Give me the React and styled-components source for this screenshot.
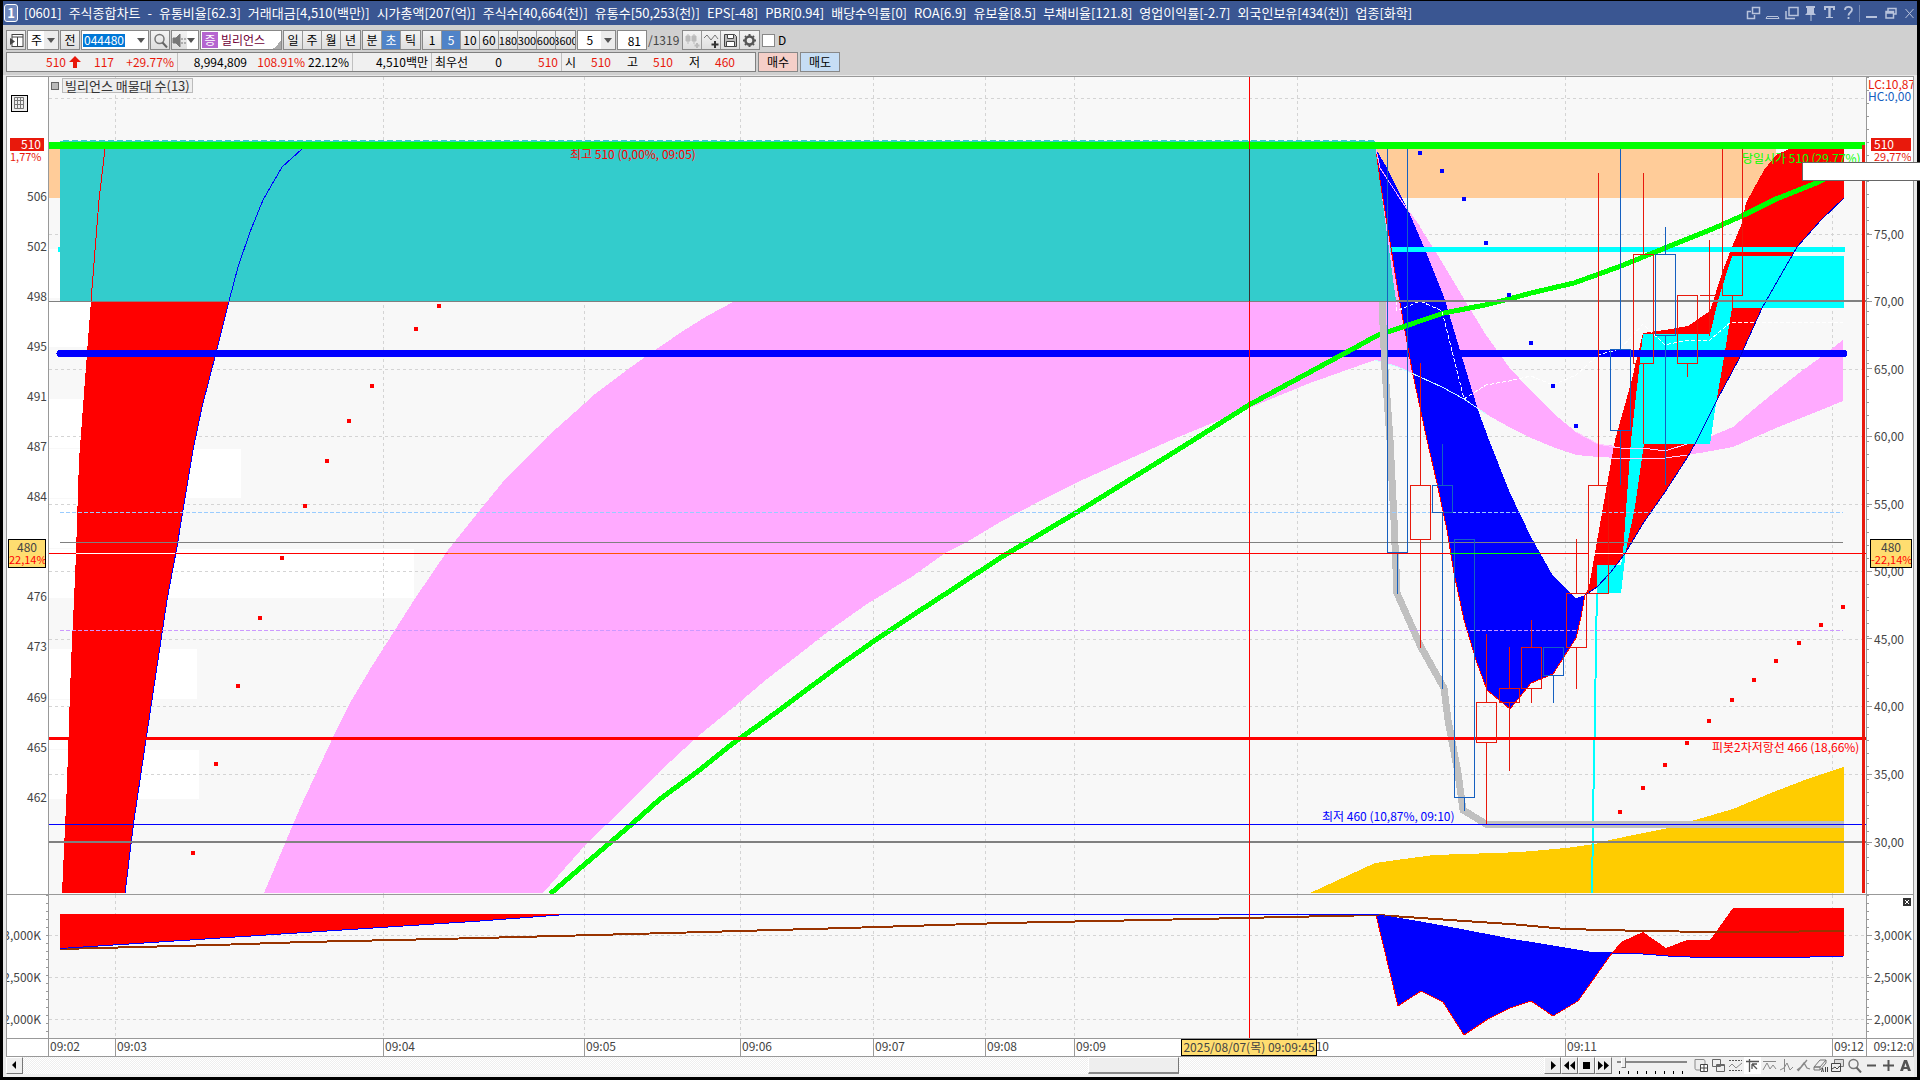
import React, { useState } from 'react';
import styled, { createGlobalStyle, css } from 'styled-components';

const GlobalStyle = createGlobalStyle`
  * {
    box-sizing: border-box;
  }

  body {
    margin: 0;
    background: #000;
  }

  body, button, input, select {
    font-family: 'Noto Sans CJK KR', sans-serif;
    font-size: 12px;
    line-height: 14px;
    color: #000;
  }
`;

const RED = '#e8190c';
const BLUE = '#1560c0';

// plot area in chart units
const PLOT = { x: 49, y: 77, w: 1817, h: 817 };
const VOLUME = { y: 895, h: 143 };

const Window = styled.div`
  position: relative;
  display: flex;
  flex-direction: column;
  min-height: 100vh;
  border: 3px solid #000;
  border-top-width: 1px;
  background: #e8e8e8;
`;

const TitleBar = styled.header`
  display: flex;
  align-items: center;
  justify-content: space-between;
  height: 24px;
  flex: none;
  padding: 0 0 0 1px;
  background: #3a5692;
  color: #fff;
`;

const Title = styled.h1`
  display: flex;
  align-items: center;
  gap: 7px;
  margin: 0;
  font-size: 13px;
  font-weight: 400;
  line-height: 16px;
  white-space: nowrap;
`;

const ScreenNo = styled.span`
  width: 14px;
  height: 18px;
  margin-right: -1px;
  border: 1px solid #fff;
  border-radius: 3px;
  background: #6f88bd;
  font-weight: 700;
  line-height: 16px;
  text-align: center;
`;

const WindowTools = styled.div`
  display: flex;
  align-items: center;
  gap: 3px;
`;

const TitleButton = styled.button`
  display: flex;
  align-items: center;
  justify-content: center;
  width: 16px;
  height: 18px;
  padding: 0;
  border: 0;
  background: none;
  color: #b8c3dc;
`;

const Divider = styled.span`
  width: 1px;
  height: 17px;
  background: #7287b4;
`;

const Bars = styled.div`
  display: flex;
  flex-direction: column;
  gap: 2px;
  flex: none;
  height: 50px;
  padding: 5px 3px 0;
  background: #d0d0d0;
`;

const Row = styled.div`
  display: flex;
  align-items: center;
  gap: ${props => props.$gap || 1}px;
`;

const Group = styled.div`
  display: flex;
  height: 20px;
  border: 1px solid #888;
  background: #e8e8e8;
`;

const ToolButton = styled.button`
  display: flex;
  align-items: center;
  justify-content: center;
  width: ${props => props.$w || 19}px;
  height: 18px;
  padding: 0;
  overflow: hidden;
  border: 0;
  border-right: 1px solid #999;
  background: ${props => (props.$active ? '#4f83c8' : 'linear-gradient(#f4f4f4, #dedede)')};
  color: ${props => (props.$active ? '#fff' : '#000')};
  font-size: ${props => (props.$small ? 11 : 12)}px;
  white-space: nowrap;

  &:last-child {
    border-right: 0;
  }
`;

const Picker = styled.label`
  display: flex;
  position: relative;
  height: 20px;
  width: ${props => props.$w}px;
  border: 1px solid #888;
  background: #fff;

  &::after {
    content: '';
    position: absolute;
    right: 3px;
    top: 7px;
    border: 4px solid transparent;
    border-top: 5px solid #555;
    border-bottom: 0;
    pointer-events: none;
  }
`;

const PickerField = styled.select`
  width: 100%;
  padding: 0 15px 0 3px;
  border: 0;
  border-radius: 0;
  appearance: none;
  background: linear-gradient(#ececec, #ececec) right / 14px 100% no-repeat #fff;
`;

const CodeField = styled.input`
  width: 54px;
  padding: 0 2px;
  border: 0;
  background: linear-gradient(#0078d7, #0078d7) 1px center / 42px 13px no-repeat #fff;
  color: #fff;
`;

const NameBox = styled.div`
  display: flex;
  align-items: center;
  gap: 3px;
  width: 82px;
  height: 20px;
  padding-left: 1px;
  border: 1px solid #888;
  background: linear-gradient(135deg, transparent 50%, #aaa 50%) right bottom / 8px 8px no-repeat #fff;
  color: #700038;
  white-space: nowrap;
`;

const MarketTag = styled.span`
  width: 16px;
  height: 16px;
  background: #b565d0;
  color: #fff;
  line-height: 15px;
  text-align: center;
`;

const CountField = styled.input`
  width: 30px;
  height: 20px;
  padding: 0 5px;
  border: 1px solid #888;
  text-align: right;
`;

const Total = styled.span`
  width: 33px;
  color: #444;
`;

const CheckLabel = styled.label`
  display: flex;
  align-items: center;
  gap: 3px;

  input {
    width: 13px;
    height: 13px;
    margin: 0 0 0 1px;
    border: 1px solid #888;
    appearance: none;
    background: #fff;
  }
`;

const Quote = styled.dl`
  display: flex;
  width: 750px;
  height: 20px;
  margin: 0;
  border: 1px solid #808080;
  background: #f0f0f0;
  white-space: nowrap;
`;

const QuoteCell = styled.div`
  display: grid;
  grid-template-columns: ${props => props.$cols};
  align-items: center;
  border-right: 1px solid #c0c0c0;
  padding: 0 3px;

  &:last-child {
    border-right: 0;
  }
`;

const Value = styled.dd`
  margin: 0;
  text-align: right;
  color: ${props => (props.$up ? RED : '#000')};
`;

const Caption = styled.dt`
  color: #000;
`;

const OrderButton = styled.button`
  width: 40px;
  height: 20px;
  padding: 0;
  border: 1px solid #888;
  background: ${props => (props.$buy ? '#f5cfc8' : '#c6ddf4')};
`;

const Chart = styled.main`
  flex: 1;
  display: grid;
  grid-template-columns: 42px minmax(0, 1fr) 47px;
  grid-template-rows: minmax(0, 1fr) 144px 17px;
  margin: 1px 3px 0;
  border: 1px solid #999;
  background: #fff;
`;

const Cell = styled.div`
  position: relative;
  overflow: hidden;
  border-bottom: 1px solid #999;
  background: ${props => (props.$plot ? '#f8f8f8' : '#fff')};
  ${props => props.$side === 'left' && css`border-right: 1px solid #999;`}
  ${props => props.$side === 'right' && css`border-left: 1px solid #999;`}

  &:nth-last-child(-n + 3) {
    border-bottom: 0;
  }
`;

const Drawing = styled.svg`
  display: block;
  position: absolute;
  inset: 0;
  width: 100%;
  height: 100%;
`;

const AxisLabel = styled.span`
  position: absolute;
  transform: translateY(-50%);
  color: #444;
  white-space: nowrap;
  ${props => (props.$left
    ? css`right: 1px;`
    : css`
      left: 0;
      padding-left: 7px;
      background: linear-gradient(#999, #999) left center / 5px 1px no-repeat;
    `)}
`;

const Ticks = styled.div`
  position: absolute;
  top: 0;
  bottom: 0;
  width: 2px;
  ${props => props.$side}: 0;
  background: repeating-linear-gradient(#999 0 1px, transparent 1px ${props => props.$step}px);
`;

const AxisNote = styled.span`
  position: absolute;
  left: 1px;
  top: ${props => props.$top}px;
  line-height: 12px;
  color: ${props => props.color};
  white-space: nowrap;
`;

const PriceTag = styled.span`
  position: absolute;
  left: ${props => (props.$left ? 3 : 4)}px;
  top: 61px;
  width: ${props => (props.$left ? 34 : 40)}px;
  height: 26px;
  overflow: hidden;
  background: linear-gradient(${RED}, ${RED}) top / 100% 13px no-repeat;
  line-height: 12px;
  color: ${RED};
  white-space: nowrap;

  b {
    display: block;
    padding: 0 3px;
    color: #fff;
    font-weight: 400;
    text-align: ${props => (props.$left ? 'right' : 'left')};
  }

  i {
    display: block;
    padding-left: ${props => (props.$left ? 0 : 3)}px;
    font-size: 11px;
    font-style: normal;
  }
`;

const CursorTag = styled.span`
  position: absolute;
  left: ${props => (props.$left ? 1 : 3)}px;
  width: ${props => (props.$left ? 38 : 42)}px;
  height: 29px;
  overflow: hidden;
  border: 1px solid #000;
  background: #ffdd70;
  color: #444;
  line-height: 13px;
  text-align: center;
  white-space: nowrap;

  i {
    display: block;
    color: #f00;
    font-size: 11px;
    font-style: normal;
  }
`;

const Legend = styled.div`
  position: absolute;
  left: 2px;
  top: 1px;
  display: flex;
  align-items: center;
  gap: 3px;
  color: #333;

  &::before {
    content: '';
    width: 6px;
    height: 6px;
    border: 1px solid #666;
    background: #bbb;
  }

  span {
    height: 15px;
    padding: 0 2px;
    border: 1px solid #bbb;
    background: #eee;
    font-size: 13px;
    line-height: 13px;
  }
`;

const Marker = styled.span`
  position: absolute;
  height: 13px;
  overflow: hidden;
  line-height: 10px;
  color: ${props => props.color};
  white-space: nowrap;
`;

const GridButton = styled.button`
  position: absolute;
  left: 4px;
  top: 18px;
  display: flex;
  padding: 0;
  border: 1px solid #000;
  background: #eee;
`;

const CloseButton = styled.button`
  position: absolute;
  right: 2px;
  top: 3px;
  display: flex;
  width: 8px;
  height: 8px;
  padding: 1px;
  border: 0;
  background: #333;
`;

const TimeLabel = styled.span`
  position: absolute;
  top: 0;
  bottom: 0;
  padding-left: 1px;
  border-left: 1px solid #999;
  color: #444;
  line-height: 14px;
  white-space: nowrap;
`;

const DateTag = styled.span`
  position: absolute;
  top: 0;
  width: 136px;
  height: 17px;
  border: 1px solid #000;
  background: #ffdd70;
  color: #444;
  line-height: 13px;
  text-align: center;
  white-space: nowrap;
`;

const Popup = styled.div`
  position: absolute;
  right: -3px;
  top: 161px;
  width: 118px;
  height: 19px;
  border: 1px solid #666;
  border-right: 0;
  background: #fff;
`;

const Footer = styled.footer`
  display: flex;
  align-items: center;
  height: 20px;
  flex: none;
  margin: 0 3px;
  padding-bottom: 3px;
  background: #f0f0f0;
`;

const RaisedButton = styled.button`
  display: flex;
  align-items: center;
  justify-content: center;
  width: 17px;
  height: 17px;
  padding: 0;
  border: 1px solid #fff;
  border-right-color: #777;
  border-bottom-color: #777;
  background: #eee;
`;

const ScrollTrack = styled.div`
  flex: 1;
  height: 17px;
  background: repeating-conic-gradient(#eee 0 25%, #fff 0 50%) 0 0 / 2px 2px;
`;

const ScrollThumb = styled.div`
  width: 6%;
  height: 17px;
  margin-left: 70%;
  border: 1px solid #fff;
  border-right-color: #777;
  border-bottom: 2px solid #888;
  background: #eee;
`;

const Speed = styled.input`
  width: 70px;
  height: 17px;
  margin: 0 6px 0 5px;
  appearance: none;
  background:
    linear-gradient(#888, #888) 0 4px / 100% 2px no-repeat,
    repeating-linear-gradient(90deg, transparent 0 2px, #000 2px 3px, transparent 3px 9px) 0 14px / 100% 3px no-repeat;

  &::-webkit-slider-thumb {
    width: 5px;
    height: 11px;
    margin-top: -6px;
    border: 1px solid #fff;
    border-right-color: #777;
    border-bottom-color: #777;
    appearance: none;
    background: #eee;
  }
`;

const FootButton = styled.button`
  display: flex;
  align-items: center;
  justify-content: center;
  width: 17px;
  height: 17px;
  padding: 0;
  border: 0;
  background: ${props => (props.$active ? '#fff' : 'none')};
`;

const icons = {
  panel: <><rect x="3" y="1.5" width="11" height="12" fill="#fff" stroke="#444" /><path d="M3 4h11M8.500 4v9" stroke="#444" /><path d="M1 5l5 3.500-5 3.500z" fill="#444" /></>,
  search: <><circle cx="6.500" cy="6" r="4.500" fill="none" stroke="#777" strokeWidth="1.500" /><path d="M9.500 9.500l4.500 5" stroke="#666" strokeWidth="2" /></>,
  speaker: <path d="M1 5h3l4-4v13l-4-4H1zM10 5v2M10 9v2M13 5v2M13 9v2" fill="#777" stroke="#777" />,
  candles: <><path d="M1 3h4v5H1zM7 3h4v5H7zM3 1v10M9 1v10" fill="#bbb" stroke="#bbb" /><path d="M12 10v5M9.500 12.500h5" stroke="#bbb" strokeWidth="2" /></>,
  wave: <><path d="M0 5l3-3 4 5 4-5 3 4" fill="none" stroke="#777" /><path d="M11 8v7M7.500 11.500h7" stroke="#333" strokeWidth="2" /></>,
  save: <><path d="M1.500 1.500h10l2 2v10h-12z" fill="#bbb" stroke="#444" /><path d="M4.500 1.500h6v4h-6zM3.500 8.500h8v5h-8z" fill="#fff" stroke="#444" /></>,
  gear: <><circle cx="7.500" cy="7.500" r="4" fill="none" stroke="#555" strokeWidth="2.500" /><path d="M7.500 1v2M7.500 12v2M1 7.500h2M12 7.500h2M3 3l1 1M11 11l1 1M12 3l-1 1M3 12l1-1" stroke="#555" strokeWidth="2" /></>,
  popOut: <path d="M6.500 1.500h7v6h-7zM5 5.500H1.500v7h7V9" fill="none" stroke="currentColor" strokeWidth="1.500" />,
  lower: <path d="M2 10.500h11l1 2H1z" fill="none" stroke="currentColor" />,
  windows: <path d="M5 1.500h9v8H5zM2 5v7.500h9" fill="none" stroke="currentColor" strokeWidth="1.500" />,
  pin: <path d="M3 0h9v2h-1v5l2 2H8.500v6h-1V9H2l2-2V2H3z" fill="currentColor" />,
  text: <path d="M2 0h11v4h-2V2H8.700v9H11v1H4v-1h2.300V2H4v2H2z" fill="currentColor" />,
  help: <path d="M4 4c0-4 7-4 7-.5 0 3-3.500 3-3.500 6M7.500 11v2" fill="none" stroke="currentColor" strokeWidth="1.800" />,
  minimize: <path d="M2 11h11" stroke="currentColor" strokeWidth="2" />,
  restore: <path d="M5 5V2.500h8V8h-2M3 5.500h7.500V12H3zM3 7h7.500" fill="none" stroke="currentColor" strokeWidth="1.500" />,
  close: <path d="M3.500 3l8 9M11.500 3l-8 9" stroke="currentColor" />,
  grid: <><path d="M2.500 1.500h9v11h-9zM2.500 4.500h9M5.500 1.500v11M8.500 1.500v11M2.500 8.500h9" fill="none" stroke="#777" /></>,
  prev: <path d="M9 3v8L5 7z" />,
  play: <path d="M6 3v9l5-4.500z" />,
  rewind: <path d="M7 3v9L2 7.500zM13 3v9L8 7.500z" />,
  stop: <path d="M4 4h7v7H4z" />,
  forward: <path d="M2 3v9l5-4.500zM8 3v9l5-4.500z" />,
  newChart: <><path d="M1 1.500h8c2 0 2 1 2 3V12H3c-2 0-2-1-2-3z" fill="#eee" stroke="#888" /><path d="M6.500 6.500h7v7h-7zM10 6.500v7M6.500 10h7" fill="#fff" stroke="#444" /></>,
  cascade: <path d="M1.500 1.500h8v7h-8zM5.500 6.500h8v7h-8zM5.500 7.500h8" fill="#eee" stroke="#666" />,
  range: <><path d="M1 2.500h13M1 12.500h13" stroke="#555" strokeDasharray="2 1" /><path d="M1 9l3-3 4 4 6-5" fill="none" stroke="#888" /></>,
  cursor: <path d="M1 3.500h13M4.500 1v13M7 6v5M7 6l5 5M7 6h5" fill="none" stroke="#555" strokeWidth="1.300" />,
  hline: <path d="M1 3.500h13M1 12l4-7 3 6 3-4 3 4" fill="none" stroke="#888" />,
  vline: <path d="M5.500 1v13M1 12l4-2 3-5 3 7 3-3" fill="none" stroke="#888" />,
  slope: <path d="M2 13L11 2M1 12l4-3 3-4 3 5 3 1" fill="none" stroke="#888" strokeWidth="1.300" />,
  eraser: <><path d="M1 9l6-7h6l-6 7zM1 9h6v3H1zM7 12l6-7V2" fill="#eee" stroke="#777" /><path d="M8.500 14l1-4 1 4M12.500 9v5M14.500 9v5" fill="none" stroke="#444" /></>,
  tiles: <><path d="M4.500 1.500h9v7h-9z" fill="#ddd" stroke="#777" /><path d="M1.500 5.500h9v8h-9zM2 11l3-2 2 2 3-3" fill="#eee" stroke="#444" /></>,
  minus: <path d="M3 7.500h9" stroke="#555" strokeWidth="2" />,
  plus: <path d="M2 7.500h11M7.500 2v11" stroke="#555" strokeWidth="2" />,
  letter: <path fillRule="evenodd" d="M6 2h3l4 11h-3l-.7-2H5.700L5 13H2zM7.500 5l-1.200 4h2.400z" fill="#555" />,
};

const Icon = ({ name }) => (
  <svg width="15" height="15" viewBox="0 0 15 15" fill="#000" aria-hidden="true">
    {icons[name]}
  </svg>
);

const titleParts = [
  '[0601]', '주식종합차트', '-', '유통비율[62.3]', '거래대금[4,510(백만)]', '시가총액[207(억)]',
  '주식수[40,664(천)]', '유통수[50,253(천)]', 'EPS[-48]', 'PBR[0.94]', '배당수익률[0]', 'ROA[6.9]',
  '유보율[8.5]', '부채비율[121.8]', '영업이익률[-2.7]', '외국인보유[434(천)]', '업종[화학]',
];
const titleTools = ['popOut', 'lower', 'windows', 'pin', 'text', 'help'];
const windowTools = ['minimize', 'restore', 'close'];
const footTools = ['newChart', 'cascade', 'range', 'cursor', 'hline', 'vline', 'slope', 'eraser', 'tiles', 'search', 'minus', 'plus', 'letter'];
const periods = ['일', '주', '월', '년'];
const units = ['분', '초', '틱'];
const intervals = ['1', '5', '10', '60', '180', '300', '600', '3600'];

const leftPrices = [
  [196, '506'], [246, '502'], [296, '498'], [346, '495'], [396, '491'], [446, '487'], [496, '484'],
  [596, '476'], [646, '473'], [697, '469'], [747, '465'], [797, '462'],
];
const rightRates = [
  [234, '75,00'], [301, '70,00'], [369, '65,00'], [436, '60,00'], [504, '55,00'],
  [571, '50,00'], [639, '45,00'], [706, '40,00'], [774, '35,00'], [842, '30,00'],
];
const volumes = [[935, '3,000K'], [977, '2,500K'], [1019, '2,000K']];
const times = [
  [115, '09:03'], [383, '09:04'], [584, '09:05'], [740, '09:06'], [873, '09:07'], [985, '09:08'],
  [1074, '09:09'], [1297, '09:10'], [1565, '09:11'], [1832, '09:12'],
];
const gridRows = [98, 167, 234, 301, 369, 436, 504, 571, 639, 706, 774, 841];

// x, y, width, height of the empty price bands
const bands = [
  [49, 249, 11, 49], [49, 301, 50, 46], [49, 399, 50, 49], [49, 449, 192, 49], [49, 499, 50, 49],
  [49, 549, 365, 49], [49, 649, 148, 50], [49, 700, 30, 49], [49, 750, 150, 49],
];

// x, wick top, body top, body bottom, wick bottom, rising
const candles = [
  [1397, 552, 146, 552, 594, false],
  [1420, 363, 485, 539, 648, true],
  [1442, 444, 485, 512, 689, false],
  [1464, 539, 539, 797, 811, false],
  [1486, 634, 702, 742, 824, true],
  [1509, 647, 688, 702, 771, true],
  [1531, 620, 647, 688, 703, true],
  [1553, 647, 647, 675, 703, false],
  [1576, 539, 593, 647, 689, true],
  [1598, 173, 485, 593, 593, true],
  [1620, 149, 349, 430, 485, false],
  [1643, 173, 254, 363, 444, true],
  [1665, 227, 254, 335, 485, false],
  [1687, 295, 295, 363, 377, true],
  [1709, 240, 295, 295, 336, true],
  [1732, 295, 146, 295, 308, true],
];

const risingDots = [
  [193, 853], [216, 764], [238, 686], [260, 618], [282, 558], [305, 506], [327, 461], [349, 421],
  [372, 386], [416, 329], [439, 306], [1620, 812], [1643, 788], [1665, 765], [1687, 743],
  [1709, 721], [1732, 700], [1754, 680], [1776, 661], [1799, 643], [1821, 625], [1843, 607],
];
const fallingDots = [
  [1420, 153], [1442, 171], [1464, 199], [1486, 243], [1509, 295], [1531, 343], [1553, 386], [1576, 426],
];

const shapes = {
  redBandLeft: '91,301 87,353 82,420 79,460 76,553 74,600 71,663 67,783 62,893 125,893 134,820 147,733 161,640 167,600 177,547 183,510 193,450 202,407 216,353 229,301',
  blueEdgeLeft: '302,149 282,167 263,200 250,232 238,267 229,301 216,353 202,407 193,450 183,510 177,547 167,600 161,640 147,733 134,820 125,893',
  pinkBand: '264,893 300,808 335,733 350,703 372,666 395,630 414,600 431,575 448,550 480,510 502,483 517,467 548,436 584,404 595,394 627,370 645,357 683,331 707,316 735,301 735,280 1376,280 1376,149 1407,209 1420,227 1442,262 1464,299 1486,335 1509,367 1531,391 1553,413 1576,432 1598,444 1643,449 1665,451 1687,443 1709,437 1733,427 1754,409 1776,391 1799,373 1821,357 1843,340 1843,401 1821,410 1776,428 1733,447 1700,453 1665,457 1620,458 1598,457 1576,455 1553,447 1531,438 1509,427 1486,414 1464,399 1442,387 1420,377 1398,367 1375,360 1310,383 1249,408 1176,438 1120,463 1080,481 1040,501 1000,522 967,542 945,553 913,576 867,604 830,630 797,656 767,679 735,706 697,737 657,774 607,824 588,842 543,893',
  pinkLow: '1376,149 1380,168 1407,209 1420,227',
  whiteLow: '1375,360 1398,367 1420,377 1442,387 1464,399 1486,414',
  teal: '60,140 1375,140 1377,160 1396,301 60,301',
  blueDip: '1376,149 1380,180 1388,230 1399,297 1412,370 1427,440 1437,483 1447,530 1454,573 1464,620 1476,660 1487,690 1510,709 1531,683 1553,674 1576,638 1581,617 1585,595 1576,598 1553,576 1531,537 1510,493 1489,440 1478,410 1462,357 1444,297 1424,247 1408,210 1387,168',
  dipEdge: '1376,149 1380,180 1388,230 1399,297 1412,370 1427,440 1437,483 1447,530 1454,573 1464,620 1476,660 1487,690 1510,709 1531,683 1553,674 1576,638 1581,617 1585,595',
  redRise: '1585,595 1589,587 1606,490 1615,440 1631,383 1643,333 1665,330 1688,326 1710,311 1722,273 1732,247 1742,223 1746,203 1753,190 1764,170 1776,155 1789,149 1844,149 1844,198 1821,220 1797,247 1778,280 1762,308 1740,357 1717,400 1696,442 1687,458 1665,492 1644,522 1624,555 1610,573 1597,587',
  riseEdge: '1844,198 1821,220 1797,247 1778,280 1762,308 1740,357 1717,400 1696,442 1687,458 1665,492 1644,522 1624,555 1610,573 1597,587 1585,595',
  cloud: '1597,565 1621,565 1623,553 1631,440 1643,334 1710,334 1719,297 1732,256 1844,256 1844,308 1732,308 1724,357 1715,410 1710,444 1644,444 1635,507 1626,550 1621,593 1597,593',
  cloudTail: '1597,593 1596,640 1595,720 1594,757 1593,823 1592,893',
  lowLine: '1382,302 1385,370 1390,440 1394,520 1397,593 1421,647 1444,688 1448,720 1458,773 1463,810 1486,824 1844,824',
  average: '550,894 612,841 633,823 660,799 697,772 732,744 770,717 813,685 840,665 877,639 913,615 953,589 1000,558 1079,511 1176,451 1249,405 1360,345 1376,336 1420,321 1444,313 1485,305 1509,299 1531,293 1574,283 1621,266 1643,257 1665,248 1710,230 1744,215 1776,199 1819,182 1844,168',
  yellow: '1310,893 1375,863 1389,861 1434,855 1494,853 1521,852 1566,848 1595,844 1610,840 1643,833 1668,828 1695,820 1733,809 1771,793 1810,778 1844,767 1844,893',
  middle: '1396,301 1397,311 1420,301 1442,311 1464,399 1486,385 1509,381 1531,376 1553,385 1576,375 1598,355 1620,349 1643,324 1665,345 1687,340 1710,340 1731,322 1843,322',
};

const PriceChart = () => (
  <Drawing
    viewBox={`${PLOT.x} ${PLOT.y} ${PLOT.w} ${PLOT.h}`}
    preserveAspectRatio="none"
    shapeRendering="crispEdges"
    fill="none"
  >
    <g fill="#fff">
      {bands.map(([x, y, w, h]) => <rect key={y} x={x} y={y} width={w} height={h} />)}
    </g>
    <g stroke="#d4d4d4" strokeDasharray="3 3">
      {gridRows.map(y => <path key={y} d={`M49 ${y}.5H1866`} />)}
      {times.map(([x]) => <path key={x} d={`M${x}.5 77V894`} />)}
    </g>
    <path d="M49 149h11v49H49zM1376 149h400v49h-400z" fill="#ffcc99" />
    <polygon points={shapes.pinkBand} fill="#ffaaff" />
    <polygon points={shapes.redBandLeft} fill="#f00" />
    <path d="M60 353.500H1844" stroke="#00f" strokeWidth="7" strokeLinecap="round" />
    <polygon points={shapes.yellow} fill="#ffcc00" />
    <polygon points={shapes.blueDip} fill="#00f" />
    <path d="M1390 249.500H1845M58 249.500h4" stroke="#0ff" strokeWidth="5" />
    <polygon points={shapes.teal} fill="#33cccc" />
    <path d="M60 140.500H1375" stroke="#f8f8f8" strokeDasharray="3 6" />
    <polyline points={shapes.dipEdge} stroke="#f00" />
    <polyline points={shapes.pinkLow} stroke="#ffaaff" />
    <polyline points={shapes.whiteLow} stroke="#ccffff" />
    <polyline points="105,149 99,200 91,301" stroke="#f00" />
    <polyline points={shapes.blueEdgeLeft} stroke="#00f" />
    <polygon points={shapes.redRise} fill="#f00" />
    <polygon points={shapes.cloud} fill="#0ff" />
    <path d="M1725 249.500H1845" stroke="#0ff" strokeWidth="5" />
    <path d="M1630 353.500H1780" stroke="#00f" strokeWidth="7" />
    <polyline points={shapes.riseEdge} stroke="#00c" />
    <polyline points={shapes.cloudTail} stroke="#0ff" strokeWidth="2" />
    <path d="M1576 432l22 12 22 4 23 0 22 3 22-7M1611 458h54l22-3" stroke="#ffccff" />
    <polyline points={shapes.average} stroke="#0f0" strokeWidth="5" />
    <polyline points={shapes.lowLine} stroke="#c0c0c0" strokeWidth="7" />
    <polyline points={shapes.middle} stroke="#fff" strokeDasharray="4 2" />

    <path d="M60 512.500H1843" stroke="#99ccff" strokeDasharray="4 2" />
    <path d="M60 630.500H1843" stroke="#cc99ff" strokeDasharray="4 2" />
    <path d="M49 301.500H1396M60 542.500H1843" stroke="#808080" />
    <path d="M1396 301H1866M49 842H1866" stroke="#808080" strokeWidth="2" />
    <path d="M49 824.500H1866" stroke="#00f" />
    <path d="M49 738.500H1866" stroke="#f00" strokeWidth="3" />

    {candles.map(([x, high, top, bottom, low, rising]) => (
      <path
        key={x}
        d={`M${x}.5 ${high}V${high < top ? top : high}M${x}.5 ${bottom}V${low}M${x - 10}.5 ${top}.5h20V${bottom}.5h-20z`}
        stroke={rising ? RED : BLUE}
      />
    ))}
    <g fill="#f00">
      {risingDots.map(([x, y]) => <circle key={x} cx={x} cy={y} r="2.300" />)}
    </g>
    <g fill="#00f">
      {fallingDots.map(([x, y]) => <circle key={x} cx={x} cy={y} r="2.300" />)}
    </g>

    <path d="M49 145.500H1865" stroke="#0f0" strokeWidth="7" />
    <path d="M1863.500 145V893" stroke={RED} strokeWidth="3" />
    <path d="M49 553.500H1866" stroke="#f00" />
    <path d="M76 553.500H175M1589 553.500H1623" stroke="#fff" />
    <path d="M448 553.500H945" stroke="#ff5500" />
    <path d="M1450 553.500H1540" stroke="#0f0" />
    <path d="M1249.500 77V894" stroke="#f00" />
    <path d="M1249.500 149V301" stroke="#333" />
  </Drawing>
);

const VolumeChart = () => (
  <Drawing
    viewBox={`${PLOT.x} ${VOLUME.y} ${PLOT.w} ${VOLUME.h}`}
    preserveAspectRatio="none"
    shapeRendering="crispEdges"
    fill="none"
  >
    <g stroke="#d4d4d4" strokeDasharray="3 3">
      {volumes.map(([y]) => <path key={y} d={`M49 ${y}.5H1866`} />)}
      {times.map(([x]) => <path key={x} d={`M${x}.5 895V1038`} />)}
    </g>
    <polygon points="60,914 567,914 480,921 60,949" fill="#f00" />
    <polygon
      points="1376,915 1398,1006 1421,991 1443,1002 1464,1035 1488,1019 1510,1008 1531,1001 1553,1016 1578,1001 1612,953 1589,952 1553,946 1510,939 1464,930 1421,922"
      fill="#00f"
    />
    <polyline
      points="1376,915 1398,1006 1421,991 1443,1002 1464,1035 1488,1019 1510,1008 1531,1001 1553,1016 1578,1001 1612,953"
      stroke="#f00"
    />
    <polygon
      points="1612,953 1621,942 1643,932 1666,948 1687,940 1710,940 1733,908 1844,908 1844,956 1711,958 1668,956 1643,954"
      fill="#f00"
    />
    <polyline
      points="60,949 138,947 216,945 305,942 395,940 480,938 595,935 705,932 846,928 1003,923 1197,919 1377,915 1421,918 1464,921 1510,924 1566,929 1644,931 1713,932 1755,932 1844,931"
      stroke="#993300"
      strokeWidth="2"
    />
    <polyline
      points="60,948.500 480,921 566,914.500 1376,914.500 1421,922 1464,930 1510,939 1553,946 1589,952 1612,953 1643,954 1668,956 1711,958 1810,957 1844,956"
      stroke="#00f"
    />
    <path d="M1249.500 895V1038" stroke="#f00" />
  </Drawing>
);

const fromLeft = x => `${((x - PLOT.x) / PLOT.w) * 100}%`;
const fromTop = y => `${((y - PLOT.y) / PLOT.h) * 100}%`;

const App = () => {
  const [interval, setInterval] = useState('5');
  const [unit, setUnit] = useState('초');
  const [code, setCode] = useState('044480');
  const [count, setCount] = useState('81');

  return (
    <>
      <GlobalStyle />
      <Window>
        <TitleBar>
          <Title>
            <ScreenNo>1</ScreenNo>
            {titleParts.map(part => <span key={part}>{part}</span>)}
          </Title>
          <WindowTools>
            {titleTools.map(name => <TitleButton key={name} aria-label={name}><Icon name={name} /></TitleButton>)}
            <Divider />
            {windowTools.map(name => <TitleButton key={name} aria-label={name}><Icon name={name} /></TitleButton>)}
          </WindowTools>
        </TitleBar>

        <Bars>
          <Row>
            <Group><ToolButton $w={18} aria-label="panel"><Icon name="panel" /></ToolButton></Group>
            <Picker $w={32}>
              <PickerField aria-label="종목 구분"><option>주</option></PickerField>
            </Picker>
            <Group><ToolButton $w={18}>전</ToolButton></Group>
            <Picker $w={68}>
              <CodeField aria-label="종목코드" value={code} onChange={e => setCode(e.target.value)} />
            </Picker>
            <Group><ToolButton $w={18} aria-label="search"><Icon name="search" /></ToolButton></Group>
            <Picker $w={28}>
              <ToolButton $w={15} aria-label="speaker"><Icon name="speaker" /></ToolButton>
            </Picker>
            <NameBox><MarketTag>증</MarketTag>빌리언스</NameBox>
            <Group>
              {periods.map(label => <ToolButton key={label}>{label}</ToolButton>)}
            </Group>
            <Group>
              {units.map(label => (
                <ToolButton key={label} $active={label === unit} onClick={() => setUnit(label)}>{label}</ToolButton>
              ))}
            </Group>
            <Group>
              {intervals.map(label => (
                <ToolButton
                  key={label}
                  $small={label.length > 2}
                  $active={label === interval}
                  onClick={() => setInterval(label)}
                >
                  {label}
                </ToolButton>
              ))}
            </Group>
            <Picker $w={39}>
              <PickerField aria-label="간격"><option>&nbsp; 5</option></PickerField>
            </Picker>
            <CountField aria-label="봉 개수" value={count} onChange={e => setCount(e.target.value)} />
            <Total>/1319</Total>
            <Group>
              {['candles', 'wave', 'save', 'gear'].map(name => (
                <ToolButton key={name} aria-label={name}><Icon name={name} /></ToolButton>
              ))}
            </Group>
            <CheckLabel><input type="checkbox" />D</CheckLabel>
          </Row>

          <Row $gap={2}>
            <Quote>
              <QuoteCell $cols="56px 17px 31px 60px">
                <Value $up>510</Value>
                <svg width="17" height="14" viewBox="0 0 17 14"><path d="M9 1l6 6h-4v6H7V7H3z" fill={RED} /></svg>
                <Value $up>117</Value>
                <Value $up>+29.77%</Value>
              </QuoteCell>
              <QuoteCell $cols="66px 58px 44px">
                <Value>8,994,809</Value>
                <Value $up>108.91%</Value>
                <Value>22.12%</Value>
              </QuoteCell>
              <QuoteCell $cols="72px"><Value>4,510백만</Value></QuoteCell>
              <QuoteCell $cols="40px 27px 56px">
                <Caption>최우선</Caption>
                <Value>0</Value>
                <Value $up>510</Value>
              </QuoteCell>
              <QuoteCell $cols="20px 26px 16px 20px 26px 16px 20px 26px">
                <Caption>시</Caption>
                <Value $up>510</Value>
                <span />
                <Caption>고</Caption>
                <Value $up>510</Value>
                <span />
                <Caption>저</Caption>
                <Value $up>460</Value>
              </QuoteCell>
            </Quote>
            <OrderButton $buy>매수</OrderButton>
            <OrderButton>매도</OrderButton>
          </Row>
        </Bars>

        <Chart>
          <Cell $side="left">
            <GridButton aria-label="grid"><Icon name="grid" /></GridButton>
            {leftPrices.map(([y, label]) => <AxisLabel key={y} $left style={{ top: fromTop(y) }}>{label}</AxisLabel>)}
            <PriceTag $left><b>510</b><i>1,77%</i></PriceTag>
            <CursorTag $left style={{ top: fromTop(539) }}>480<i>22,14%</i></CursorTag>
          </Cell>
          <Cell $plot>
            <PriceChart />
            <Legend><span>빌리언스 매물대 수(13)</span></Legend>
            <Marker color="#f00" style={{ left: fromLeft(570), top: fromTop(149) }}>최고 510 (0,00%, 09:05)</Marker>
            <Marker color="#0f0" style={{ left: fromLeft(1742), top: fromTop(153) }}>당일시가 510 (29,77%)</Marker>
            <Marker color="#00f" style={{ left: fromLeft(1322), top: fromTop(811) }}>최저 460 (10,87%, 09:10)</Marker>
            <Marker color="#f00" style={{ left: fromLeft(1712), top: fromTop(742) }}>피봇2차저항선 466 (18,66%)</Marker>
          </Cell>
          <Cell $side="right">
            <Ticks $side="left" $step={13} />
            <AxisNote $top={1} color={RED}>LC:10,87</AxisNote>
            <AxisNote $top={13} color={BLUE}>HC:0,00</AxisNote>
            <PriceTag><b>510</b><i>29,77%</i></PriceTag>
            {rightRates.map(([y, label]) => <AxisLabel key={y} style={{ top: fromTop(y) }}>{label}</AxisLabel>)}
            <CursorTag style={{ top: fromTop(539) }}>480<i>-22,14%</i></CursorTag>
          </Cell>

          <Cell $side="left">
            <Ticks $side="right" $step={8} />
            {volumes.map(([y, label]) => (
              <AxisLabel key={y} $left style={{ top: y - VOLUME.y, right: 7 }}>{label}</AxisLabel>
            ))}
          </Cell>
          <Cell $plot><VolumeChart /></Cell>
          <Cell $side="right">
            <Ticks $side="left" $step={8} />
            {volumes.map(([y, label]) => (
              <AxisLabel key={y} style={{ top: y - VOLUME.y }}>{label}</AxisLabel>
            ))}
            <CloseButton aria-label="close">
              <svg width="6" height="6" viewBox="0 0 6 6"><path d="M1 1l4 4M5 1L1 5" stroke="#fff" /></svg>
            </CloseButton>
          </Cell>

          <Cell $side="left" />
          <Cell>
            <TimeLabel style={{ left: -1 }}>09:02</TimeLabel>
            {times.map(([x, label]) => <TimeLabel key={x} style={{ left: fromLeft(x) }}>{label}</TimeLabel>)}
            <DateTag style={{ left: fromLeft(1181) }}>2025/08/07(목) 09:09:45</DateTag>
          </Cell>
          <Cell $side="right"><AxisNote $top={1} color="#444">&nbsp; 09:12:0</AxisNote></Cell>
        </Chart>

        <Footer>
          <RaisedButton aria-label="prev"><Icon name="prev" /></RaisedButton>
          <ScrollTrack><ScrollThumb /></ScrollTrack>
          {['play', 'rewind', 'stop', 'forward'].map(name => (
            <RaisedButton key={name} aria-label={name}><Icon name={name} /></RaisedButton>
          ))}
          <Speed type="range" min="0" max="100" defaultValue="6" aria-label="재생 속도" />
          {footTools.map(name => (
            <FootButton key={name} $active={name === 'cursor'} aria-label={name}><Icon name={name} /></FootButton>
          ))}
        </Footer>
        <Popup />
      </Window>
    </>
  );
};

export default App;
